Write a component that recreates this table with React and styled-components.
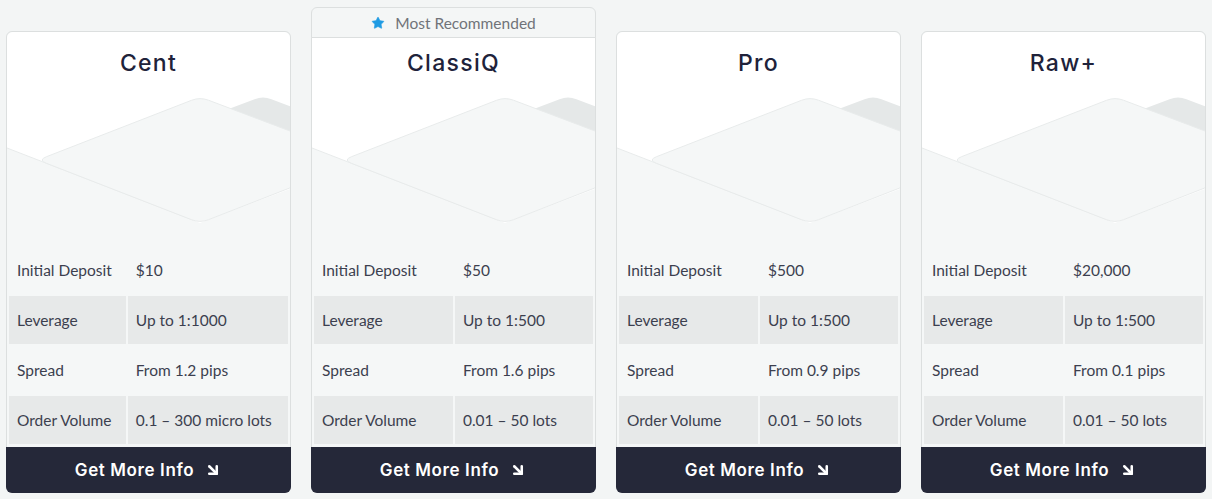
import React from 'react';
import styled, { createGlobalStyle } from 'styled-components';
import { ArrowDownRight, Star } from 'lucide-react';

const GlobalStyle = createGlobalStyle`
  body {
    margin: 0;
    background: #f3f5f5;
    font-family: Lato, "Noto Sans", sans-serif;
  }
`;

const Page = styled.div`
  display: grid;
  grid-template-columns: repeat(4, 285px);
  gap: 20px;
  padding: 31px 0 0 6px;
`;

const Card = styled.div`
  position: relative;
  display: flex;
  flex-direction: column;
  height: 462px;
  box-sizing: border-box;
  border: 1px solid #dcdfdf;
  border-radius: 6px;
  background: #f5f7f7;
`;

const Badge = styled.div`
  position: absolute;
  top: -25px;
  left: -1px;
  right: -1px;
  height: 29px;
  display: flex;
  align-items: center;
  justify-content: center;
  gap: 10px;
  background: #f4f6f6;
  border: 1px solid #dcdfdf;
  border-radius: 6px 6px 0 0;
  color: #707379;
  font-size: 15.5px;
  z-index: 2;
`;

const Head = styled.div`
  position: relative;
  height: 212px;
  overflow: hidden;
  border-radius: 6px 6px 0 0;
  background: #ffffff;
`;

const Art = styled.svg`
  position: absolute;
  inset: 0;
  width: 100%;
  height: 100%;
`;

const Title = styled.h2`
  position: relative;
  margin: 0;
  padding-top: 16px;
  text-align: center;
  font-family: Inter, sans-serif;
  font-weight: 500;
  font-size: 23px;
  line-height: 30px;
  letter-spacing: 1.3px;
  color: #20223a;
`;

const Table = styled.table`
  border-spacing: 2px;
  width: 100%;
`;

const Cell = styled.td`
  height: 48px;
  padding: 0 8px;
  font-size: 15.5px;
  color: #3c3f4f;
  background: ${(p) => (p.$shade ? '#e7e9e9' : 'transparent')};
  white-space: nowrap;
`;

const Button = styled.button`
  display: flex;
  align-items: center;
  justify-content: center;
  gap: 10px;
  height: 46px;
  margin: auto -1px -1px;
  border: none;
  border-radius: 0 0 6px 6px;
  background: #252839;
  color: #ffffff;
  font-family: Inter, sans-serif;
  font-weight: 600;
  font-size: 17px;
  letter-spacing: 0.6px;
  cursor: pointer;
`;

const rounded = (pts, r) => {
  const n = pts.length;
  let d = '';
  for (let i = 0; i < n; i += 1) {
    const [px, py] = pts[(i - 1 + n) % n];
    const [cx, cy] = pts[i];
    const [nx, ny] = pts[(i + 1) % n];
    const l1 = Math.hypot(cx - px, cy - py);
    const l2 = Math.hypot(nx - cx, ny - cy);
    const a = [cx + ((px - cx) * r) / l1, cy + ((py - cy) * r) / l1];
    const b = [cx + ((nx - cx) * r) / l2, cy + ((ny - cy) * r) / l2];
    d += `${i === 0 ? 'M' : 'L'}${a[0]},${a[1]} Q${cx},${cy} ${b[0]},${b[1]} `;
  }
  return `${d}Z`;
};

const HeadArt = () => (
  <Art viewBox="0 0 283 212" preserveAspectRatio="none">
    <path d={rounded([[256, 64], [370, 107], [256, 150], [142, 107]], 9)} fill="#e5e8e8" />
    <path d="M0,116 L193,191 L283,157 L283,212 L0,212 Z" fill="#f5f7f7" />
    <path d="M0,116 L186,188" stroke="#e8ebeb" strokeWidth="1" fill="none" />
    <path
      d={rounded([[193, 65], [357, 127], [193, 191], [31, 128]], 9)}
      fill="#f5f7f7"
      stroke="#e8ebeb"
      strokeWidth="1"
    />
  </Art>
);

const plans = [
  { name: 'Cent', deposit: '$10', leverage: 'Up to 1:1000', spread: 'From 1.2 pips', volume: '0.1 – 300 micro lots' },
  { name: 'ClassiQ', deposit: '$50', leverage: 'Up to 1:500', spread: 'From 1.6 pips', volume: '0.01 – 50 lots', top: true },
  { name: 'Pro', deposit: '$500', leverage: 'Up to 1:500', spread: 'From 0.9 pips', volume: '0.01 – 50 lots' },
  { name: 'Raw+', deposit: '$20,000', leverage: 'Up to 1:500', spread: 'From 0.1 pips', volume: '0.01 – 50 lots' },
];

const PlanCard = ({ plan }) => {
  const rows = [
    ['Initial Deposit', plan.deposit],
    ['Leverage', plan.leverage],
    ['Spread', plan.spread],
    ['Order Volume', plan.volume],
  ];
  return (
    <Card>
      {plan.top && (
        <Badge>
          <Star size={14} fill="#1f9be3" color="#1f9be3" strokeWidth={1} />
          Most Recommended
        </Badge>
      )}
      <Head>
        <HeadArt />
        <Title>{plan.name}</Title>
      </Head>
      <Table>
        <tbody>
          {rows.map(([label, value], i) => (
            <tr key={label}>
              <Cell $shade={i % 2 === 1}>{label}</Cell>
              <Cell $shade={i % 2 === 1}>{value}</Cell>
            </tr>
          ))}
        </tbody>
      </Table>
      <Button>
        Get More Info
        <ArrowDownRight size={18} strokeWidth={3.4} />
      </Button>
    </Card>
  );
};

export default function App() {
  return (
    <>
      <GlobalStyle />
      <Page>
        {plans.map((p) => (
          <PlanCard key={p.name} plan={p} />
        ))}
      </Page>
    </>
  );
}
